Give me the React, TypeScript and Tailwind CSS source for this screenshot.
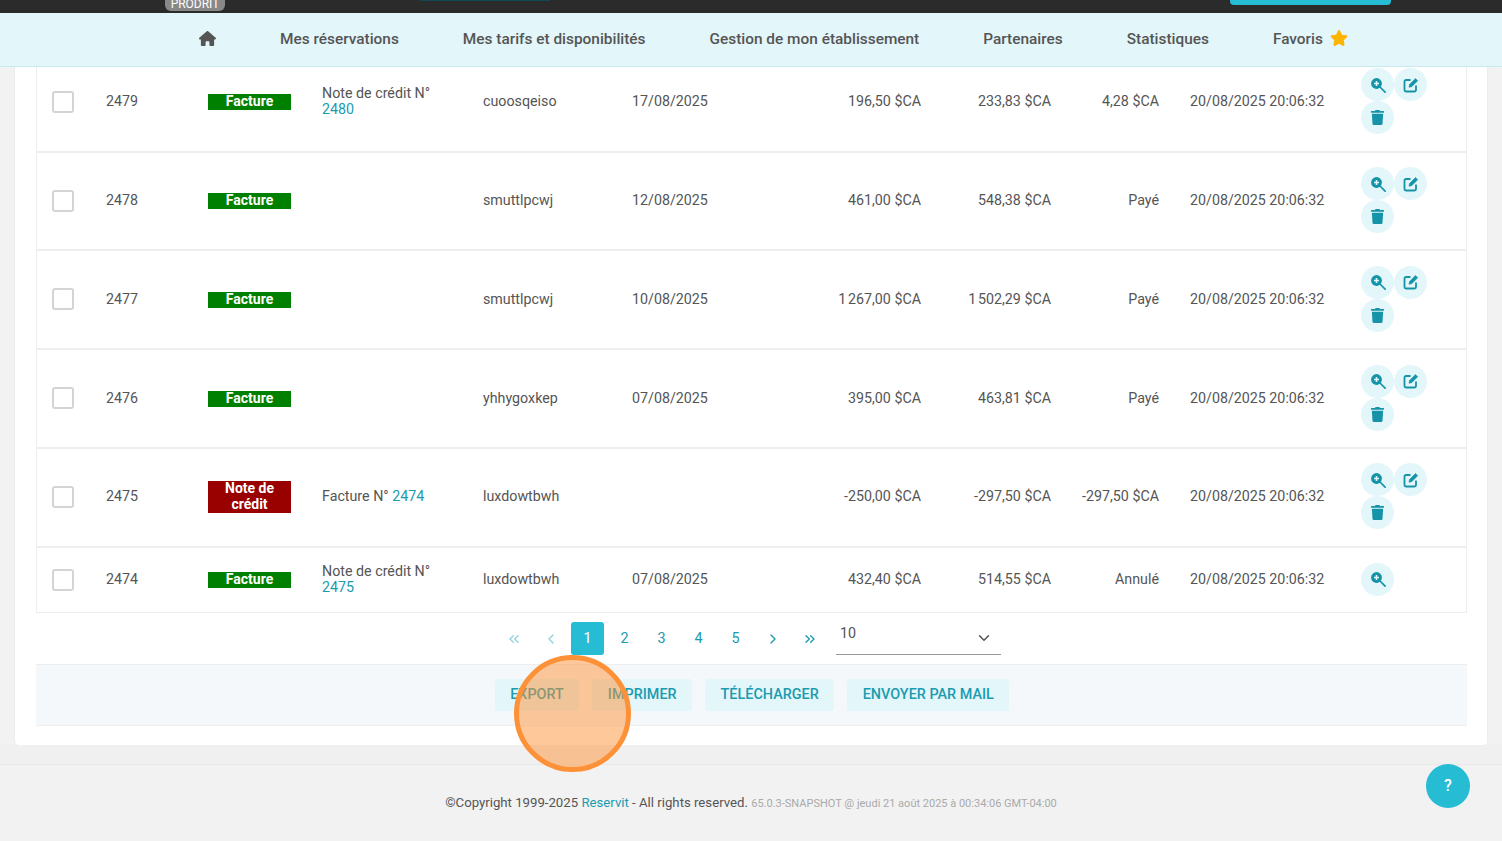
import { FaStar, FaTrash } from 'react-icons/fa';
import { FaHouse } from 'react-icons/fa6';
import { LuChevronDown, LuChevronLeft, LuChevronRight, LuChevronsLeft, LuChevronsRight } from 'react-icons/lu';

type Row = {
  id: string;
  kind: 'Facture' | 'Note de crédit';
  refLabel?: string;
  refId?: string;
  client: string;
  date?: string;
  ht: string;
  ttc: string;
  due: string;
  height: string;
  readOnly?: boolean;
};

const rows: Row[] = [
  { id: '2479', kind: 'Facture', refLabel: 'Note de crédit N°', refId: '2480', client: 'cuoosqeiso', date: '17/08/2025', ht: '196,50 $CA', ttc: '233,83 $CA', due: '4,28 $CA', height: 'h-[99px] pb-[1px]' },
  { id: '2478', kind: 'Facture', client: 'smuttlpcwj', date: '12/08/2025', ht: '461,00 $CA', ttc: '548,38 $CA', due: 'Payé', height: 'h-[98px]' },
  { id: '2477', kind: 'Facture', client: 'smuttlpcwj', date: '10/08/2025', ht: '1\u202f267,00 $CA', ttc: '1\u202f502,29 $CA', due: 'Payé', height: 'h-[99px]' },
  { id: '2476', kind: 'Facture', client: 'yhhygoxkep', date: '07/08/2025', ht: '395,00 $CA', ttc: '463,81 $CA', due: 'Payé', height: 'h-[99px]' },
  { id: '2475', kind: 'Note de crédit', refLabel: 'Facture N°', refId: '2474', client: 'luxdowtbwh', ht: '-250,00 $CA', ttc: '-297,50 $CA', due: '-297,50 $CA', height: 'h-[99px] pb-[1px]' },
  { id: '2474', kind: 'Facture', refLabel: 'Note de crédit N°', refId: '2475', client: 'luxdowtbwh', date: '07/08/2025', ht: '432,40 $CA', ttc: '514,55 $CA', due: 'Annulé', height: 'h-[65px]', readOnly: true },
];

const navItems = ['Mes réservations', 'Mes tarifs et disponibilités', 'Gestion de mon établissement', 'Partenaires', 'Statistiques'];

function ZoomIcon() {
  return (
    <svg viewBox="0 0 16 16" className="h-[16px] w-[16px]">
      <circle cx="6.5" cy="6.5" r="5.4" fill="currentColor" />
      <path d="M6.5 4v5M4 6.5h5" stroke="#e3f6fa" strokeWidth="1.6" />
      <path d="M10.5 10.5l4.6 4.6" stroke="currentColor" strokeWidth="1.7" strokeLinecap="round" />
    </svg>
  );
}

function EditIcon() {
  return (
    <svg viewBox="0 0 16 16" fill="none" stroke="currentColor" className="h-[16px] w-[16px]">
      <path d="M7.5 3H3a1.5 1.5 0 0 0-1.5 1.5V13A1.5 1.5 0 0 0 3 14.5h8.5A1.5 1.5 0 0 0 13 13V8.5" strokeWidth="1.8" />
      <path d="M6 10.2l.5-2.7 6-6 2.2 2.2-6 6z" fill="currentColor" strokeWidth="0.6" />
    </svg>
  );
}

function ActionButton({ children }: { children: React.ReactNode }) {
  return (
    <button className="flex h-[33px] w-[33px] items-center justify-center rounded-full bg-[#e3f6fa] text-[15px] text-[#1593a8]">
      {children}
    </button>
  );
}

function InvoiceRow({ row }: { row: Row }) {
  return (
    <div className={`grid grid-cols-[69px_102px_114px_161px_149px_100px_189px_130px_108px_202px_105px] items-center border-b-2 border-[#eeeeee] last:border-b ${row.height}`}>
      <div className="pb-[1px] pl-[15px]">
        <div className="h-[22px] w-[22px] rounded-[3px] border-2 border-[#d4d4d4] bg-white" />
      </div>
      <div>{row.id}</div>
      <div>
        <div className={`w-[83px] text-center text-[14px] leading-[16px] font-bold text-white ${row.kind === 'Facture' ? 'bg-[#008000]' : 'bg-[#990000]'}`}>
          <span className="inline-block -translate-y-[1px]">{row.kind}</span>
        </div>
      </div>
      <div className="pr-[20px] pb-[2px] leading-[16px]">
        {row.refLabel} <a className="text-[#1a9bb0]">{row.refId}</a>
      </div>
      <div>{row.client}</div>
      <div>{row.date}</div>
      <div className="text-right">{row.ht}</div>
      <div className="text-right">{row.ttc}</div>
      <div className="text-right">{row.due}</div>
      <div className="pl-[31px]">20/08/2025 20:06:32</div>
      <div className="flex w-[66px] flex-wrap pb-[2px]">
        <ActionButton><ZoomIcon /></ActionButton>
        {!row.readOnly && (
          <>
            <ActionButton><EditIcon /></ActionButton>
            <ActionButton><FaTrash /></ActionButton>
          </>
        )}
      </div>
    </div>
  );
}

function Pagination() {
  const arrow = 'flex h-[33px] w-[33px] items-center justify-center text-[16px]';
  return (
    <div className="flex h-[51px] items-start pt-[9px] pl-[461px] text-[14.3px] text-[#1a9bb0]">
      <div className="flex gap-[4px]">
        <span className={`${arrow} text-[#8fd3de]`}><LuChevronsLeft /></span>
        <span className={`${arrow} text-[#8fd3de]`}><LuChevronLeft /></span>
        <span className="flex h-[33px] w-[33px] items-center justify-center rounded-[3px] bg-[#26bcd4] text-white">1</span>
        {['2', '3', '4', '5'].map((p) => (
          <span key={p} className="flex h-[33px] w-[33px] items-center justify-center">{p}</span>
        ))}
        <span className={arrow}><LuChevronRight /></span>
        <span className={arrow}><LuChevronsRight /></span>
      </div>
      <div className="ml-[10px] flex h-[33px] w-[165px] items-start justify-between border-b border-[#999999] pl-[4px] pr-[8px] text-[#555555]">
        <span className="leading-[22px]">10</span>
        <LuChevronDown className="mt-[7px] text-[18px]" />
      </div>
    </div>
  );
}

export default function App() {
  return (
    <div className="relative h-[841px] overflow-hidden bg-[#f2f2f2] font-['Roboto',sans-serif] text-[14.25px] text-[#555555]">
      <div className="relative z-10 flex h-[13px] items-start overflow-hidden bg-[#2b2b2b]">
        <div className="ml-[165px] flex h-[11px] w-[60px] items-end justify-center rounded-b-[6px] bg-[#888888] text-[12px] leading-[14px] text-white">PRODRIT</div>
        <div className="ml-[195px] h-[1px] w-[130px] bg-[#0f4a52]" />
        <div className="ml-[680px] h-[5px] w-[161px] rounded-b-[4px] bg-[#26bcd4]" />
      </div>

      <nav className="relative z-10 flex h-[54px] items-center gap-[64px] border-b border-[#c9e9f0] bg-[#e3f6fa] pl-[199px] text-[15.4px] font-medium">
        <FaHouse className="-mt-[2px] text-[17px]" />
        {navItems.map((item) => (
          <a key={item}>{item}</a>
        ))}
        <a className="flex items-center gap-[7px]">
          Favoris <FaStar className="-mt-[2px] text-[18px] text-[#ffb400]" />
        </a>
      </nav>

      <main className="mx-[15px] -mt-[13px] rounded-b-[4px] bg-white pt-0 pr-[20px] pb-[19px] pl-[21px] shadow-[0_0_2px_rgba(0,0,0,0.08)]">
        <div className="border-x border-[#eeeeee]">
          {rows.map((row) => (
            <InvoiceRow key={row.id} row={row} />
          ))}
        </div>
        <Pagination />
        <div className="flex h-[62px] items-center justify-center gap-[13px] border-y border-[#eeeeee] bg-[#f5f8fa] pl-[1px] text-[14.4px] font-medium uppercase text-[#1a9bb0]">
          {['Export', 'Imprimer', 'Télécharger', 'Envoyer par mail'].map((label) => (
            <button key={label} className="h-[32px] rounded-[3px] bg-[#e3f6fa] px-[15.5px] uppercase">{label}</button>
          ))}
        </div>
      </main>

      <div className="h-[19px] bg-[#f0f0f0]" />
      <footer className="border-t border-[#e8e8e8] pt-[28px] text-center text-[13.2px]">
        ©Copyright 1999-2025 <a className="text-[#1a9bb0]">Reservit</a> - All rights reserved.{' '}
        <span className="text-[11px] text-[#aaaaaa]">65.0.3-SNAPSHOT @ jeudi 21 août 2025 à 00:34:06 GMT-04:00</span>
      </footer>

      {/* click marker from the recording */}
      <div className="absolute top-[655px] left-[514px] z-20 h-[117px] w-[117px] rounded-full border-[5px] border-[#fd9137] bg-[#fd9137]/50" />
      <button className="absolute top-[764px] left-[1426px] z-20 flex h-[44px] w-[44px] items-center justify-center rounded-full bg-[#26bcd4] text-[16px] font-medium text-white">?</button>
    </div>
  );
}
